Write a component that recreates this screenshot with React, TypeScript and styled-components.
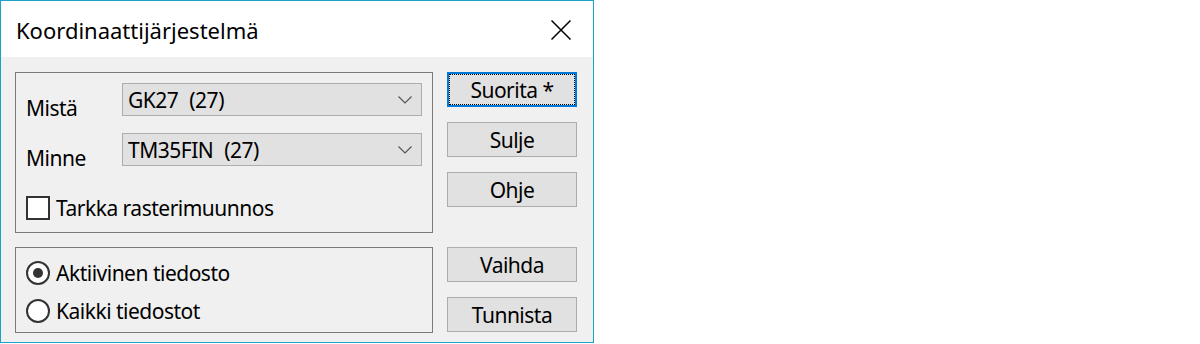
import React, { useState } from "react";
import styled, { createGlobalStyle } from "styled-components";

const Global = createGlobalStyle`
  html, body {
    margin: 0;
    padding: 0;
    background: #ffffff;
  }
  body {
    font-family: "Noto Sans", "Open Sans", sans-serif;
    color: #000;
  }
`;

const Window = styled.div`
  width: 592px;
  height: 341px;
  border: 1px solid #1aa1c6;
  display: flex;
  flex-direction: column;
  background: #f0f0f0;
`;

const TitleBar = styled.div`
  height: 56px;
  flex: none;
  background: #ffffff;
  display: flex;
  align-items: center;
  justify-content: space-between;
  padding: 0 22px 0 15px;
`;

const Title = styled.div`
  font-size: 22px;
  line-height: 28px;
  margin-top: 2px;
`;

const CloseButton = styled.div`
  width: 20px;
  height: 20px;
  margin-top: 2px;
  display: flex;
`;

const Body = styled.div`
  flex: 1;
  display: grid;
  grid-template-columns: 418px 130px;
  grid-template-rows: 161px 86px;
  column-gap: 14px;
  row-gap: 14px;
  padding: 15px 0 0 14px;
  font-size: 21px;
  line-height: 26px;
  letter-spacing: -0.5px;
`;

const Group = styled.div`
  border: 1px solid #7a7a7a;
  display: flex;
  flex-direction: column;
`;

const ButtonStack = styled.div`
  display: flex;
  flex-direction: column;
  gap: 15px;
`;

const Button = styled.div<{ $focused?: boolean }>`
  position: relative;
  height: 35px;
  box-sizing: border-box;
  background: #e1e1e1;
  border: ${({ $focused }) => ($focused ? "2px solid #0078d7" : "1px solid #adadad")};
  display: flex;
  align-items: center;
  justify-content: center;
  ${({ $focused }) =>
    $focused &&
    `
    &::after {
      content: "";
      position: absolute;
      inset: 0px;
      border: 1px dotted #000;
    }
  `}
`;

const FieldRow = styled.div<{ $top: number }>`
  display: flex;
  align-items: flex-start;
  height: 33px;
  margin-top: ${({ $top }) => $top}px;
  margin-right: 10px;
`;

const FieldLabel = styled.div`
  width: 96px;
  flex: none;
  padding-left: 10px;
  padding-top: 12px;
`;

const Combo = styled.div`
  flex: 1;
  height: 33px;
  box-sizing: border-box;
  background: #e1e1e1;
  border: 1px solid #adadad;
  display: flex;
  align-items: center;
  justify-content: space-between;
  padding: 0 9px 0 5px;
  white-space: pre;
`;

const Gap = styled.span`
  display: inline-block;
  width: 11px;
`;

const CheckRow = styled.label<{ $top: number }>`
  display: flex;
  align-items: center;
  gap: 6px;
  margin-top: ${({ $top }) => $top}px;
  padding-left: 10px;
  cursor: default;
`;

const CheckBox = styled.span`
  width: 24px;
  height: 24px;
  box-sizing: border-box;
  border: 2px solid #333;
  background: #fff;
  flex: none;
`;

const RadioCircle = styled.span<{ $on: boolean }>`
  width: 24px;
  height: 24px;
  box-sizing: border-box;
  border: 2px solid #333;
  border-radius: 50%;
  background: #fff;
  flex: none;
  display: flex;
  align-items: center;
  justify-content: center;
  &::after {
    content: "";
    width: 10px;
    height: 10px;
    border-radius: 50%;
    background: #333;
    display: ${({ $on }) => ($on ? "block" : "none")};
  }
`;

const Chevron = () => (
  <svg width="14" height="8" viewBox="0 0 14 8">
    <path d="M0.5 0.5 L7 7 L13.5 0.5" fill="none" stroke="#555" strokeWidth="1.2" />
  </svg>
);

const CloseIcon = () => (
  <svg width="20" height="20" viewBox="0 0 20 20">
    <path d="M0.5 0.5 L19.5 19.5 M19.5 0.5 L0.5 19.5" stroke="#000" strokeWidth="1.5" />
  </svg>
);

const App = () => {
  const [exact, setExact] = useState(false);
  const [scope, setScope] = useState(0);

  return (
    <>
      <Global />
      <Window>
        <TitleBar>
          <Title>Koordinaattijärjestelmä</Title>
          <CloseButton>
            <CloseIcon />
          </CloseButton>
        </TitleBar>
        <Body>
          <Group>
            <FieldRow $top={10}>
              <FieldLabel>Mistä</FieldLabel>
              <Combo>
                <span>
                  GK27<Gap />(27)
                </span>
                <Chevron />
              </Combo>
            </FieldRow>
            <FieldRow $top={17}>
              <FieldLabel>Minne</FieldLabel>
              <Combo>
                <span>
                  TM35FIN<Gap />(27)
                </span>
                <Chevron />
              </Combo>
            </FieldRow>
            <CheckRow $top={29} onClick={() => setExact((v) => !v)}>
              <CheckBox>{exact ? "" : null}</CheckBox>
              Tarkka rasterimuunnos
            </CheckRow>
          </Group>
          <ButtonStack>
            <Button $focused>Suorita *</Button>
            <Button>Sulje</Button>
            <Button>Ohje</Button>
          </ButtonStack>
          <Group>
            <CheckRow $top={12} onClick={() => setScope(0)}>
              <RadioCircle $on={scope === 0} />
              Aktiivinen tiedosto
            </CheckRow>
            <CheckRow $top={12} onClick={() => setScope(1)}>
              <RadioCircle $on={scope === 1} />
              Kaikki tiedostot
            </CheckRow>
          </Group>
          <ButtonStack>
            <Button>Vaihda</Button>
            <Button>Tunnista</Button>
          </ButtonStack>
        </Body>
      </Window>
    </>
  );
};

export default App;
